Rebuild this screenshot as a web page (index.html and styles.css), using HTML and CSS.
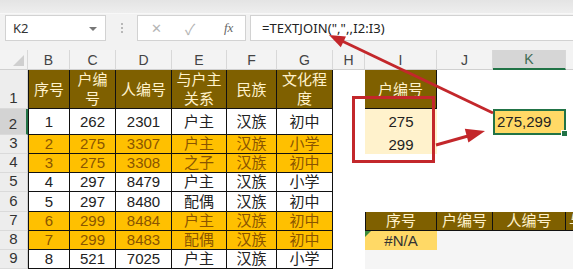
FILE: index.html
```html
<!DOCTYPE html>
<html lang="zh">
<head>
  <meta charset="UTF-8" />
  <title>TEXTJOIN</title>
  <link rel="stylesheet" href="styles.css">
</head>
<body>

<div id="topband"></div>

<div id="fbar">
  <div class="namebox">K2<span class="drop"></span></div>
  <div class="dots"><i></i><i></i><i></i></div>
  <div class="fxbox">
    <span class="x">✕</span>
    <span class="ok">✓</span>
    <span class="fx">fx</span>
  </div>
  <div class="formula">=TEXTJOIN(",",,I2:I3)</div>
</div>

<div id="gap"></div>

<div id="sheet">
  <!-- column headers -->
  <div class="ch corner"><span class="tri"></span></div>
  <div class="ch">B</div><div class="ch">C</div><div class="ch">D</div>
  <div class="ch">E</div><div class="ch">F</div><div class="ch">G</div>
  <div class="ch">H</div><div class="ch">I</div><div class="ch">J</div>
  <div class="ch sel">K</div><div class="ch last"></div>

  <!-- row 1 -->
  <div class="rh">1</div>
  <div class="hd first"><span>序号</span></div>
  <div class="hd"><span>户编</span><span>号</span></div>
  <div class="hd"><span>人编号</span></div>
  <div class="hd"><span>与户主</span><span>关系</span></div>
  <div class="hd"><span>民族</span></div>
  <div class="hd"><span>文化程</span><span>度</span></div>
  <div class="e"></div><div class="hd low"><span>户编号</span></div><div class="e"></div><div class="e"></div><div class="e"></div>

  <!-- row 2 -->
  <div class="rh sel">2</div>
  <div class="w first">1</div><div class="w">262</div><div class="w">2301</div>
  <div class="w">户主</div><div class="w">汉族</div><div class="w">初中</div>
  <div class="e"></div><div class="cream">275</div><div class="e"></div>
  <div class="result">275,299<span class="handle"></span></div><div class="e"></div>

  <!-- row 3 -->
  <div class="rh">3</div>
  <div class="o first">2</div><div class="o">275</div><div class="o">3307</div>
  <div class="o">户主</div><div class="o">汉族</div><div class="o">小学</div>
  <div class="e"></div><div class="cream">299</div><div class="e"></div><div class="e"></div><div class="e"></div>

  <!-- row 4 -->
  <div class="rh">4</div>
  <div class="o first">3</div><div class="o">275</div><div class="o">3308</div>
  <div class="o">之子</div><div class="o">汉族</div><div class="o">初中</div>
  <div class="e"></div><div class="e"></div><div class="e"></div><div class="e"></div><div class="e"></div>

  <!-- row 5 -->
  <div class="rh">5</div>
  <div class="w first">4</div><div class="w">297</div><div class="w">8479</div>
  <div class="w">户主</div><div class="w">汉族</div><div class="w">小学</div>
  <div class="e"></div><div class="e"></div><div class="e"></div><div class="e"></div><div class="e"></div>

  <!-- row 6 -->
  <div class="rh">6</div>
  <div class="w first">5</div><div class="w">297</div><div class="w">8480</div>
  <div class="w">配偶</div><div class="w">汉族</div><div class="w">初中</div>
  <div class="e"></div><div class="e"></div><div class="e"></div><div class="e"></div><div class="e"></div>

  <!-- row 7 -->
  <div class="rh">7</div>
  <div class="o first">6</div><div class="o">299</div><div class="o">8484</div>
  <div class="o">户主</div><div class="o">汉族</div><div class="o">初中</div>
  <div class="e"></div>
  <div class="hd first">序号</div><div class="hd">户编号</div><div class="hd">人编号</div><div class="hd cut">与</div>

  <!-- row 8 -->
  <div class="rh">8</div>
  <div class="o first">7</div><div class="o">299</div><div class="o">8483</div>
  <div class="o">配偶</div><div class="o">汉族</div><div class="o">初中</div>
  <div class="e"></div><div class="na">#N/A</div><div class="g"></div><div class="g"></div><div class="g"></div>

  <!-- row 9 -->
  <div class="rh">9</div>
  <div class="w first">8</div><div class="w">521</div><div class="w">7025</div>
  <div class="w">户主</div><div class="w">汉族</div><div class="w">小学</div>
  <div class="e"></div><div class="g"></div><div class="g"></div><div class="g"></div><div class="g"></div>
</div>

<!-- red annotations drawn over the sheet -->
<svg id="marks" width="573" height="269" viewBox="0 0 573 269">
  <rect x="353.5" y="97.5" width="80" height="64" fill="none" stroke="#c3272b" stroke-width="3"/>
  <line x1="493" y1="113" x2="342" y2="41" stroke="#c3272b" stroke-width="3"/>
  <polygon points="329,35 346,36.5 340.8,47.3" fill="#c3272b"/>
  <line x1="436" y1="145" x2="468" y2="136" stroke="#c3272b" stroke-width="3"/>
  <polygon points="485,131 468.4,142.4 464.8,128.8" fill="#c3272b"/>
</svg>

</body>
</html>
```

FILE: styles.css
```css
body {
  margin:0; width:573px; height:269px; overflow:hidden;
  background:#f2f2f2; position:relative;
  font-family:"Noto Sans", "Noto Sans CJK SC", sans-serif;
}

/* TOP + FORMULA BAR */
#topband {
  height:13px;
  background:linear-gradient(#e4e4e4, #eeeeee);
  border-bottom:1px solid #f8f8f8;
}
#fbar {
  height:26px; margin-top:1px; padding-left:5px;
  display:flex; align-items:stretch;
}
.namebox {
  width:101px; box-sizing:border-box;
  background:#fff; border:1px solid #d2d2d2;
  display:flex; align-items:center; padding-left:7px;
  font-size:13px; color:#333; position:relative;
}
.drop {
  position:absolute; right:8px; top:11px;
  border-left:4px solid transparent; border-right:4px solid transparent;
  border-top:4px solid #777;
}
.dots {
  width:31px; display:flex; flex-direction:column;
  align-items:center; justify-content:center; gap:2px;
}
.dots i { width:2px; height:2px; background:#b8b8b8; }
.fxbox {
  width:109px; box-sizing:border-box;
  background:#fff; border:1px solid #d2d2d2;
  display:flex; align-items:center; position:relative;
}
.fxbox .x  { position:absolute; left:13px; color:#b5b5b5; font-size:13px; }
.fxbox .ok { position:absolute; left:47px; color:#b5b5b5; font-size:15px; }
.fxbox .fx {
  position:absolute; left:86px; color:#666; font-size:13px;
  font-family:"Liberation Serif", serif; font-style:italic;
}
.formula {
  flex:1; margin-left:4px; box-sizing:border-box;
  background:#fff; border:1px solid #d2d2d2; border-right:none;
  display:flex; align-items:center; padding-left:11px;
  font-size:13px; color:#222; letter-spacing:0.1px;
}
#gap { height:9px; }

/* SHEET GRID */
#sheet {
  display:grid;
  grid-template-columns:28px 42px 46px 56px 55px 50px 56px 32px 72px 56px 73px 1fr;
  grid-template-rows:20px 39px 26px 19px 19px 19px 20px 19px 19px 19px;
  background:#fff;
}
#sheet > div {
  box-sizing:border-box; display:flex; align-items:center; justify-content:center;
  font-size:15px; line-height:18px; text-align:center; position:relative;
  font-family:"Liberation Sans", "Noto Sans CJK SC", sans-serif;
  white-space:nowrap;
}

.ch {
  background:#f3f3f3; border-right:1px solid #d8d8d8; border-bottom:1px solid #d0d0d0;
  color:#444; font-size:14px !important;
}
.ch.sel { background:#d6d6d6; border-bottom:2px solid #217346; color:#3f6b52; }
.ch.last { border-right:none; }
.corner .tri {
  position:absolute; right:3px; bottom:3px;
  border-left:11px solid transparent; border-bottom:11px solid #cfcfcf;
}

.rh {
  background:#ededed; border-right:1px solid #cfcfcf; border-bottom:1px solid #dadada;
  color:#333; align-items:flex-end !important; padding-bottom:1px;
}
.rh.sel { background:#d3d3d3; border-right:2px solid #217346; }

.hd, .w, .o { border-right:1px solid #111; border-bottom:1px solid #111; }
.first { border-left:1px solid #111; }
.hd { background:#7f6000; color:#fff2cc; flex-direction:column; }
.hd span { display:block; line-height:19px; }
.hd.low { justify-content:flex-end !important; padding-bottom:9px; }
.w  { background:#fff; color:#222; }
.o  { background:#ffc000; color:#8a5500; }
.hd.cut { align-items:flex-start !important; padding-left:3px; overflow:hidden; border-right:none; }

.cream { background:#fff2cc; color:#222; }
.result {
  background:#ffd966; color:#222; border:2px solid #217346;
  justify-content:flex-start !important; padding-left:2px;
}
.handle {
  position:absolute; right:-4px; bottom:-4px;
  width:5px; height:5px; background:#217346; border:1px solid #fff;
}
.na { background:#ffd966; color:#333; }
.na::before {
  content:""; position:absolute; left:0; top:0;
  border-top:6px solid #3a8a3a; border-right:6px solid transparent;
}
.g { background:#f5f5f5; }

#marks { position:absolute; left:0; top:0; pointer-events:none; }
```
